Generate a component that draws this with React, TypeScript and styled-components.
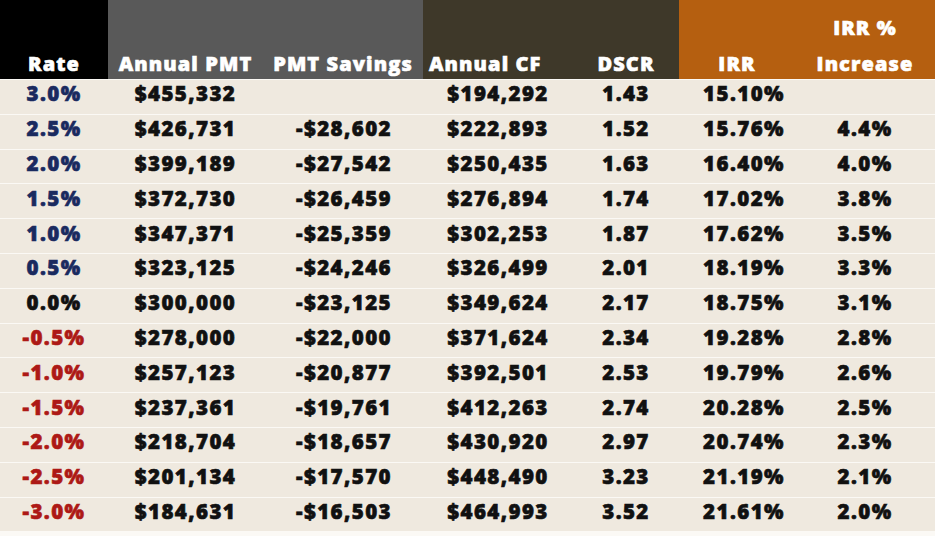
import React from "react";
import styled, { createGlobalStyle } from "styled-components";

const Global = createGlobalStyle`
  html, body { margin: 0; padding: 0; background: #fbf9f5; }
  body { font-family: "Open Sans", "Noto Sans", "DejaVu Sans", sans-serif; }
`;

const widths = [108, 155, 160, 150, 106, 116, 140];

const Table = styled.div`
  display: grid;
  grid-template-columns: ${widths.map((w) => `${w}px`).join(" ")};
  grid-template-rows: 79px repeat(13, 34.8px);
  width: 935px;
  background: #fbf9f5;
`;

const headerColors: Record<string, string> = {
  black: "#000000",
  gray: "#595959",
  olive: "#3e3829",
  orange: "#b55f10",
};

const HeadCell = styled.div<{ $tone: string; $left?: boolean }>`
  background: ${(p) => headerColors[p.$tone]};
  color: #ffffff;
  font-weight: 800;
  font-size: 20px;
  line-height: 30px;
  letter-spacing: 1.1px;
  -webkit-text-stroke: 0.6px #ffffff;
  display: flex;
  flex-direction: column;
  justify-content: flex-end;
  gap: 6px;
  align-items: ${(p) => (p.$left ? "flex-start" : "center")};
  padding: 0 0 0 ${(p) => (p.$left ? "6px" : "0")};
  box-sizing: border-box;
  white-space: nowrap;
  text-align: center;
`;

const Cell = styled.div<{ $color?: string; $shift?: number }>`
  background: #efe9df;
  border-top: 1.5px solid #fbf9f5;
  box-sizing: border-box;
  display: flex;
  align-items: center;
  justify-content: center;
  padding: 0 0 7px ${(p) => p.$shift ?? 0}px;
  color: ${(p) => p.$color ?? "#111111"};
  -webkit-text-stroke: 0.6px ${(p) => p.$color ?? "#111111"};
  font-weight: 800;
  font-size: 20.5px;
  line-height: 26px;
  letter-spacing: 1.4px;
  white-space: nowrap;
`;

const rows: string[][] = [
  ["3.0%", "$455,332", "", "$194,292", "1.43", "15.10%", ""],
  ["2.5%", "$426,731", "-$28,602", "$222,893", "1.52", "15.76%", "4.4%"],
  ["2.0%", "$399,189", "-$27,542", "$250,435", "1.63", "16.40%", "4.0%"],
  ["1.5%", "$372,730", "-$26,459", "$276,894", "1.74", "17.02%", "3.8%"],
  ["1.0%", "$347,371", "-$25,359", "$302,253", "1.87", "17.62%", "3.5%"],
  ["0.5%", "$323,125", "-$24,246", "$326,499", "2.01", "18.19%", "3.3%"],
  ["0.0%", "$300,000", "-$23,125", "$349,624", "2.17", "18.75%", "3.1%"],
  ["-0.5%", "$278,000", "-$22,000", "$371,624", "2.34", "19.28%", "2.8%"],
  ["-1.0%", "$257,123", "-$20,877", "$392,501", "2.53", "19.79%", "2.6%"],
  ["-1.5%", "$237,361", "-$19,761", "$412,263", "2.74", "20.28%", "2.5%"],
  ["-2.0%", "$218,704", "-$18,657", "$430,920", "2.97", "20.74%", "2.3%"],
  ["-2.5%", "$201,134", "-$17,570", "$448,490", "3.23", "21.19%", "2.1%"],
  ["-3.0%", "$184,631", "-$16,503", "$464,993", "3.52", "21.61%", "2.0%"],
];

// horizontal nudge of the value within each column (px of left padding)
const columnShift = [0, 0, 2, 0, 0, 14, 0];

const rateColor = (r: string) => {
  const v = parseFloat(r);
  if (v > 0) return "#1a2a5f";
  if (v < 0) return "#ad1916";
  return "#111111";
};

export default function App() {
  return (
    <>
      <Global />
      <Table>
        <HeadCell $tone="black">Rate</HeadCell>
        <HeadCell $tone="gray">Annual PMT</HeadCell>
        <HeadCell $tone="gray">PMT Savings</HeadCell>
        <HeadCell $tone="olive" $left>Annual CF</HeadCell>
        <HeadCell $tone="olive">DSCR</HeadCell>
        <HeadCell $tone="orange">IRR</HeadCell>
        <HeadCell $tone="orange">
          <span>IRR %</span>
          <span>Increase</span>
        </HeadCell>
        {rows.map((r, i) =>
          r.map((v, j) => (
            <Cell
              key={`${i}-${j}`}
              $color={j === 0 ? rateColor(v) : undefined}
              $shift={columnShift[j]}
            >
              {v}
            </Cell>
          ))
        )}
      </Table>
    </>
  );
}
